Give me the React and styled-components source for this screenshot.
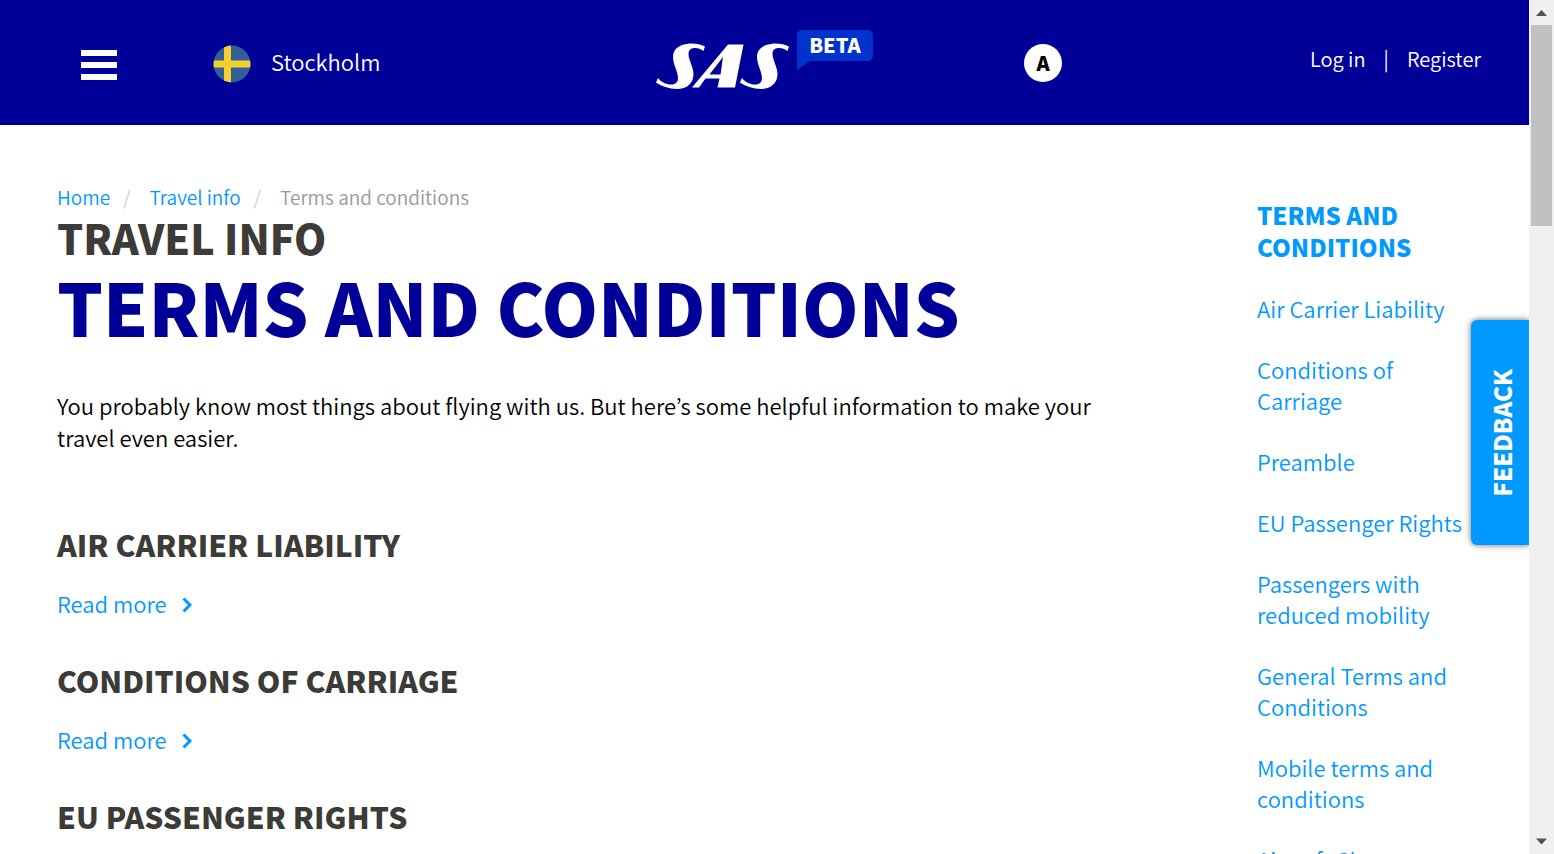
import React from "react";
import styled, { createGlobalStyle } from "styled-components";

const GlobalStyle = createGlobalStyle`
  *, *::before, *::after { box-sizing: border-box; }
  html, body { margin: 0; padding: 0; }
  body {
    background: #fff;
    color: #000;
    font-family: "Noto Sans CJK KR", "Noto Sans", sans-serif;
    font-size: 22px;
    font-weight: 350;
    line-height: 32px;
  }
  h1, h2, h3, p, ul, ol { margin: 0; padding: 0; }
  ul, ol { list-style: none; }
  button { font-family: inherit; font-weight: inherit; border: 0; cursor: pointer; }
`;

const Window = styled.div`
  display: flex;
  height: 100vh;
  overflow: hidden;
`;

const Page = styled.div`
  position: relative;
  flex: 1;
  min-width: 0;
  overflow: hidden;
`;

const Header = styled.header`
  display: grid;
  grid-template-columns: 1fr auto 1fr;
  align-items: center;
  height: 125px;
  padding: 0 48px;
  background: #000099;
  color: #fff;
`;

const HeaderStart = styled.div`
  display: flex;
  align-items: center;
  gap: 96px;
  padding-left: 33px;
`;

const HeaderEnd = styled.div`
  display: flex;
  align-items: center;
  justify-content: space-between;
  padding-left: 151px;
`;

const MenuButton = styled.button`
  display: flex;
  flex-direction: column;
  gap: 6px;
  width: 36px;
  padding: 4px 0 0;
  background: none;
`;

const MenuBar = styled.span`
  height: 6px;
  width: 100%;
  background: #fff;
`;

const CityButton = styled.button`
  display: flex;
  align-items: center;
  gap: 20px;
  padding: 2px 0 0;
  background: none;
  color: #fff;
  font-size: 22px;
  line-height: 32px;
`;

const CityName = styled.span`
  padding-bottom: 6px;
`;

const BrandRow = styled.a`
  display: flex;
  align-items: flex-start;
  gap: 8px;
  padding-bottom: 6px;
  text-decoration: none;
`;

const Wordmark = styled.svg`
  margin-top: 13px;
`;

const Beta = styled.span`
  position: relative;
  width: 76px;
  height: 31px;
  border-radius: 5px;
  background: #0033cc;
  color: #fff;
  font-size: 20px;
  font-weight: 900;
  line-height: 30px;
  text-align: center;
`;

const BetaTail = styled.svg`
  position: absolute;
  left: 0;
  top: 26px;
`;

const AccessButton = styled.button`
  width: 38px;
  height: 38px;
  padding: 0;
  border-radius: 50%;
  background: #fff;
  color: #000;
  font-size: 20px;
  font-weight: 900;
  line-height: 36px;
`;

const Account = styled.nav`
  display: flex;
  gap: 18px;
  padding-bottom: 8px;
  font-size: 20px;
`;

const AccountLink = styled.a`
  color: #fff;
  text-decoration: none;
`;

const Body = styled.div`
  display: flex;
  justify-content: space-between;
  padding: 58px 57px 0;
`;

const Main = styled.main`
  flex: 1;
  max-width: 1056px;
`;

const Crumbs = styled.ol`
  display: flex;
  font-size: 19px;
  line-height: 28px;
  color: #999;
`;

const Crumb = styled.li`
  & + &::before {
    content: "/";
    padding: 0 19px 0 13px;
    color: #ccc;
  }
`;

const Link = styled.a`
  color: #0099ff;
  text-decoration: none;
`;

const Section = styled.h2`
  color: #3d3b37;
  font-size: 41px;
  font-weight: 900;
  line-height: 52px;
`;

const Title = styled.h1`
  color: #000099;
  font-size: 72px;
  font-weight: 900;
  line-height: 86px;
`;

const Lead = styled.p`
  padding: 40px 0 72px;
`;

const Topic = styled.section`
  height: 136px;
`;

const TopicTitle = styled.h3`
  color: #3d3b37;
  font-size: 30px;
  font-weight: 900;
  line-height: 38px;
`;

const ReadMore = styled(Link)`
  display: flex;
  align-items: center;
  gap: 15px;
  margin-top: 24px;
`;

const Chevron = styled.svg`
  margin-top: 3px;
`;

const Side = styled.nav`
  width: 215px;
  padding-top: 16px;
`;

const SideTitle = styled.h2`
  margin-bottom: 30px;
  color: #0099ff;
  font-size: 24px;
  font-weight: 900;
  line-height: 32px;
`;

const SideList = styled.ul`
  display: flex;
  flex-direction: column;
  gap: 30px;
  line-height: 31px;
`;

const Feedback = styled.button`
  position: absolute;
  right: 0;
  top: 320px;
  width: 58px;
  height: 225px;
  padding: 0 0 0 2px;
  border-radius: 6px 0 0 6px;
  background: #0099ff;
  box-shadow: 0 0 6px rgba(0, 0, 0, 0.6);
  color: #fff;
  font-size: 24px;
  font-weight: 900;
  writing-mode: sideways-lr;
`;

const ScrollTrack = styled.div`
  display: flex;
  flex-direction: column;
  align-items: center;
  width: 25px;
  background: #f0f0f0;
`;

const ScrollThumb = styled.div`
  width: 21px;
  height: 201px;
  margin-bottom: auto;
  background: #c1c1c1;
`;

const Arrow = ({ down }) => (
  <svg width="25" height="25" viewBox="0 0 25 25" aria-hidden="true">
    <path d={down ? "M7 9.500h11L12.500 15.500z" : "M7 16h11L12.500 10z"} fill="#505050" />
  </svg>
);

const Flag = () => (
  <svg width="38" height="38" viewBox="0 0 38 38" aria-hidden="true">
    <clipPath id="disc"><circle cx="19" cy="19" r="18.500" /></clipPath>
    <g clipPath="url(#disc)">
      <path d="M0 0h38v38H0z" fill="#2f5f93" />
      <path d="M11 0h7v38h-7zM0 15.500h38v7H0z" fill="#f5d02f" />
    </g>
  </svg>
);

const topics = ["AIR CARRIER LIABILITY", "CONDITIONS OF CARRIAGE", "EU PASSENGER RIGHTS"];

const sideLinks = [
  "Air Carrier Liability",
  "Conditions of Carriage",
  "Preamble",
  "EU Passenger Rights",
  "Passengers with reduced mobility",
  "General Terms and Conditions",
  "Mobile terms and conditions",
  "Aircraft Charges",
];

export default function App() {
  return (
    <Window>
      <GlobalStyle />
      <Page>
        <Header>
          <HeaderStart>
            <MenuButton aria-label="Menu"><MenuBar /><MenuBar /><MenuBar /></MenuButton>
            <CityButton><Flag /><CityName>Stockholm</CityName></CityButton>
          </HeaderStart>
          <BrandRow href="#" aria-label="SAS Beta">
            <Wordmark width="133" height="46" viewBox="0 0 133 46" fill="#fff" aria-hidden="true">
              <path id="s" d="M49 3.500C44 1 37 0 31 1C22 2 17 7 17 14C17 21 22 29 22 35C22 39 20 41.500 15 41.500C10 41.500 5 39 2 35L0 39.500C5 43 13 46 21 46C31 46 37.500 40 37.500 31C37.500 24 32.500 17 32.500 11C32.500 7 35 5 39 5C42 5 45 6 47.500 8z" />
              <path d="M72 1.500h15.500L79 44.500H61.500L63.500 35.500H49.500L43 44.500H36zM67 14L53.500 31.500h11z" fillRule="evenodd" />
              <use href="#s" x="84" />
            </Wordmark>
            <Beta>
              BETA
              <BetaTail width="18" height="14" viewBox="0 0 18 14" aria-hidden="true">
                <path d="M0 0h18L13 5L0 14z" fill="#0033cc" />
              </BetaTail>
            </Beta>
          </BrandRow>
          <HeaderEnd>
            <AccessButton aria-label="Accessibility">A</AccessButton>
            <Account aria-label="Account">
              <AccountLink href="#">Log in</AccountLink>
              <span>|</span>
              <AccountLink href="#">Register</AccountLink>
            </Account>
          </HeaderEnd>
        </Header>
        <Body>
          <Main>
            <Crumbs>
              <Crumb><Link href="#">Home</Link></Crumb>
              <Crumb><Link href="#">Travel info</Link></Crumb>
              <Crumb>Terms and conditions</Crumb>
            </Crumbs>
            <Section>TRAVEL INFO</Section>
            <Title>TERMS AND CONDITIONS</Title>
            <Lead>
              You probably know most things about flying with us. But here’s some helpful
              information to make your travel even easier.
            </Lead>
            {topics.map((t) => (
              <Topic key={t}>
                <TopicTitle>{t}</TopicTitle>
                <ReadMore href="#">
                  Read more
                  <Chevron width="10" height="16" viewBox="0 0 10 16" fill="none" stroke="#0099ff" strokeWidth="3" aria-hidden="true">
                    <path d="M1.500 1.500L8 8L1.500 14.500" />
                  </Chevron>
                </ReadMore>
              </Topic>
            ))}
          </Main>
          <Side>
            <SideTitle>TERMS AND CONDITIONS</SideTitle>
            <SideList>
              {sideLinks.map((t) => (
                <li key={t}><Link href="#">{t}</Link></li>
              ))}
            </SideList>
          </Side>
        </Body>
        <Feedback>FEEDBACK</Feedback>
      </Page>
      <ScrollTrack aria-hidden="true">
        <Arrow />
        <ScrollThumb />
        <Arrow down />
      </ScrollTrack>
    </Window>
  );
}
